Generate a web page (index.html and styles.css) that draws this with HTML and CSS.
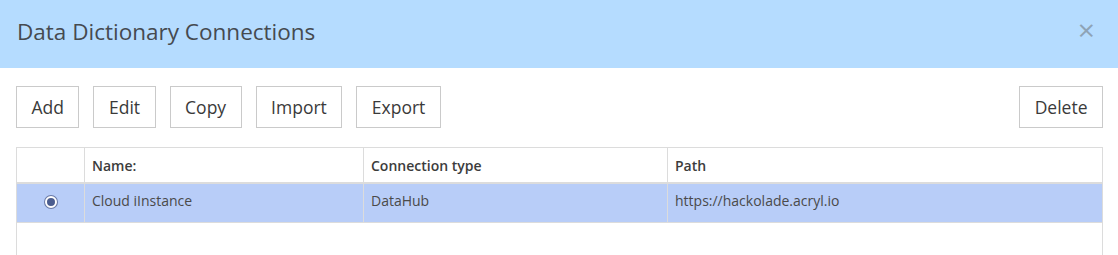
FILE: index.html
```html
<!DOCTYPE html>
<html lang="en">
<head>
  <meta charset="UTF-8">
  <title>Data Dictionary Connections</title>
  <link rel="stylesheet" href="styles.css">
</head>
<body>

  <div class="modal">
    <div class="modal-header">
      <h2 class="modal-title">Data Dictionary Connections</h2>
      <span class="close-btn">&times;</span>
    </div>

    <div class="modal-body">
      <div class="toolbar">
        <div class="btn-group">
          <button class="btn">Add</button>
          <button class="btn">Edit</button>
          <button class="btn">Copy</button>
          <button class="btn">Import</button>
          <button class="btn">Export</button>
        </div>
        <button class="btn">Delete</button>
      </div>

      <div class="table-wrap">
        <table class="conn-table">
          <thead>
            <tr>
              <th class="col-select"></th>
              <th class="col-name">Name:</th>
              <th class="col-type">Connection type</th>
              <th>Path</th>
            </tr>
          </thead>
          <tbody>
            <tr class="selected">
              <td class="col-select"><span class="radio"></span></td>
              <td>Cloud iInstance</td>
              <td>DataHub</td>
              <td>https://hackolade.acryl.io</td>
            </tr>
          </tbody>
        </table>
      </div>
    </div>
  </div>

</body>
</html>
```

FILE: styles.css
```css
body {
  margin: 0;
  font-family: 'Open Sans', 'Noto Sans', sans-serif;
  background: #fff;
  color: #444;
  overflow: hidden;
}

.modal-header {
  display: flex;
  justify-content: space-between;
  align-items: center;
  height: 68px;
  padding: 0 23px 0 17px;
  background-color: #b5dcff;
}

.modal-title {
  margin: 0;
  font-size: 22.5px;
  font-weight: 400;
  color: #454a50;
  padding-bottom: 6px;
}

.close-btn {
  font-size: 30px;
  line-height: 1;
  color: #8ea3b6;
  padding-bottom: 8px;
}

.modal-body {
  padding: 18px 15px 0 16px;
}

.toolbar {
  display: flex;
  justify-content: space-between;
}

.btn-group {
  display: flex;
  gap: 14px;
}

.btn {
  font-family: inherit;
  font-size: 17.5px;
  color: #3a3a3a;
  background: #fff;
  border: 1px solid #cacaca;
  height: 42px;
  padding: 0 14.5px;
  cursor: pointer;
}

.table-wrap {
  margin-top: 19px;
  height: 108px;
  border: 1px solid #dcdcdc;
  border-bottom: none;
}

.conn-table {
  width: 100%;
  border-collapse: collapse;
  font-size: 14px;
}

.conn-table th {
  text-align: left;
  font-weight: 600;
  color: #3c3c3c;
  height: 34px;
  padding: 0 7px;
  border-left: 1px solid #dcdcdc;
  border-bottom: 2px solid #dcdcdc;
}

.conn-table td {
  height: 33px;
  padding: 0 7px 5px;
  color: #4a4a4a;
  border-left: 1px solid #dcdcdc;
  border-bottom: 1px solid #dcdcdc;
}

.conn-table th:first-child,
.conn-table td:first-child {
  border-left: none;
}

.col-select {
  width: 53px;
  text-align: center;
}

.col-name {
  width: 264px;
}

.col-type {
  width: 289px;
}

.selected td {
  background-color: #b8cdf8;
}

.radio {
  display: inline-block;
  width: 8px;
  height: 8px;
  border-radius: 50%;
  background: #4b5d8f;
  border: 2px solid #fff;
  box-shadow: 0 0 0 1px #6a7aa6;
  vertical-align: middle;
  margin-left: 1px;
}
```
